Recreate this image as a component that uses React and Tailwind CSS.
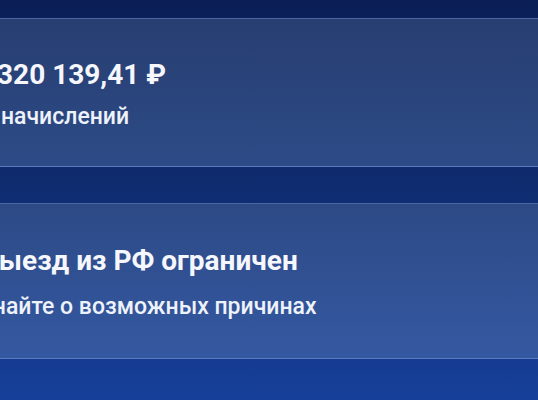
// Account screen: two info cards on a dark blue backdrop
export default function App() {
  const cards = [
    {
      title: "1 320 139,41 ₽",
      titleShift: "-ml-[26px]",
      sub: "Сумма начислений",
      subShift: "-ml-[78px]",
      pad: "pt-[38px]",
      gap: "mt-[10px]",
      height: "h-[149px]",
      bg: "from-[#273e71] to-[#2d4b87]",
    },
    {
      title: "Выезд из РФ ограничен",
      titleShift: "-ml-[19px]",
      sub: "Узнайте о возможных причинах",
      subShift: "-ml-[33px]",
      pad: "pt-[39px]",
      gap: "mt-[14px]",
      height: "h-[156px]",
      bg: "from-[#2d4a86] to-[#3458a1]",
    },
  ];

  return (
    <div
      className="w-[538px] min-h-[400px] overflow-hidden bg-gradient-to-b from-[#0a1e55] via-[#0f2d72] to-[#17409a] pt-[18px]"
      style={{ fontFamily: "Roboto, 'Noto Sans', sans-serif" }}
    >
      <div className="flex flex-col gap-[36px]">
        {cards.map((c) => (
          <div
            key={c.title}
            className={`${c.height} ${c.pad} border-y border-t-[#4b66a0] border-b-[#5b7bbb] bg-gradient-to-b ${c.bg} overflow-hidden whitespace-nowrap`}
          >
            <div className={`${c.titleShift} text-[28px] leading-[36px] font-bold text-[#f5f7fc]`}>
              {c.title}
            </div>
            <div className={`${c.subShift} ${c.gap} text-[23px] leading-[28px] font-medium text-[#eef2fa]`}>
              {c.sub}
            </div>
          </div>
        ))}
      </div>
    </div>
  );
}
